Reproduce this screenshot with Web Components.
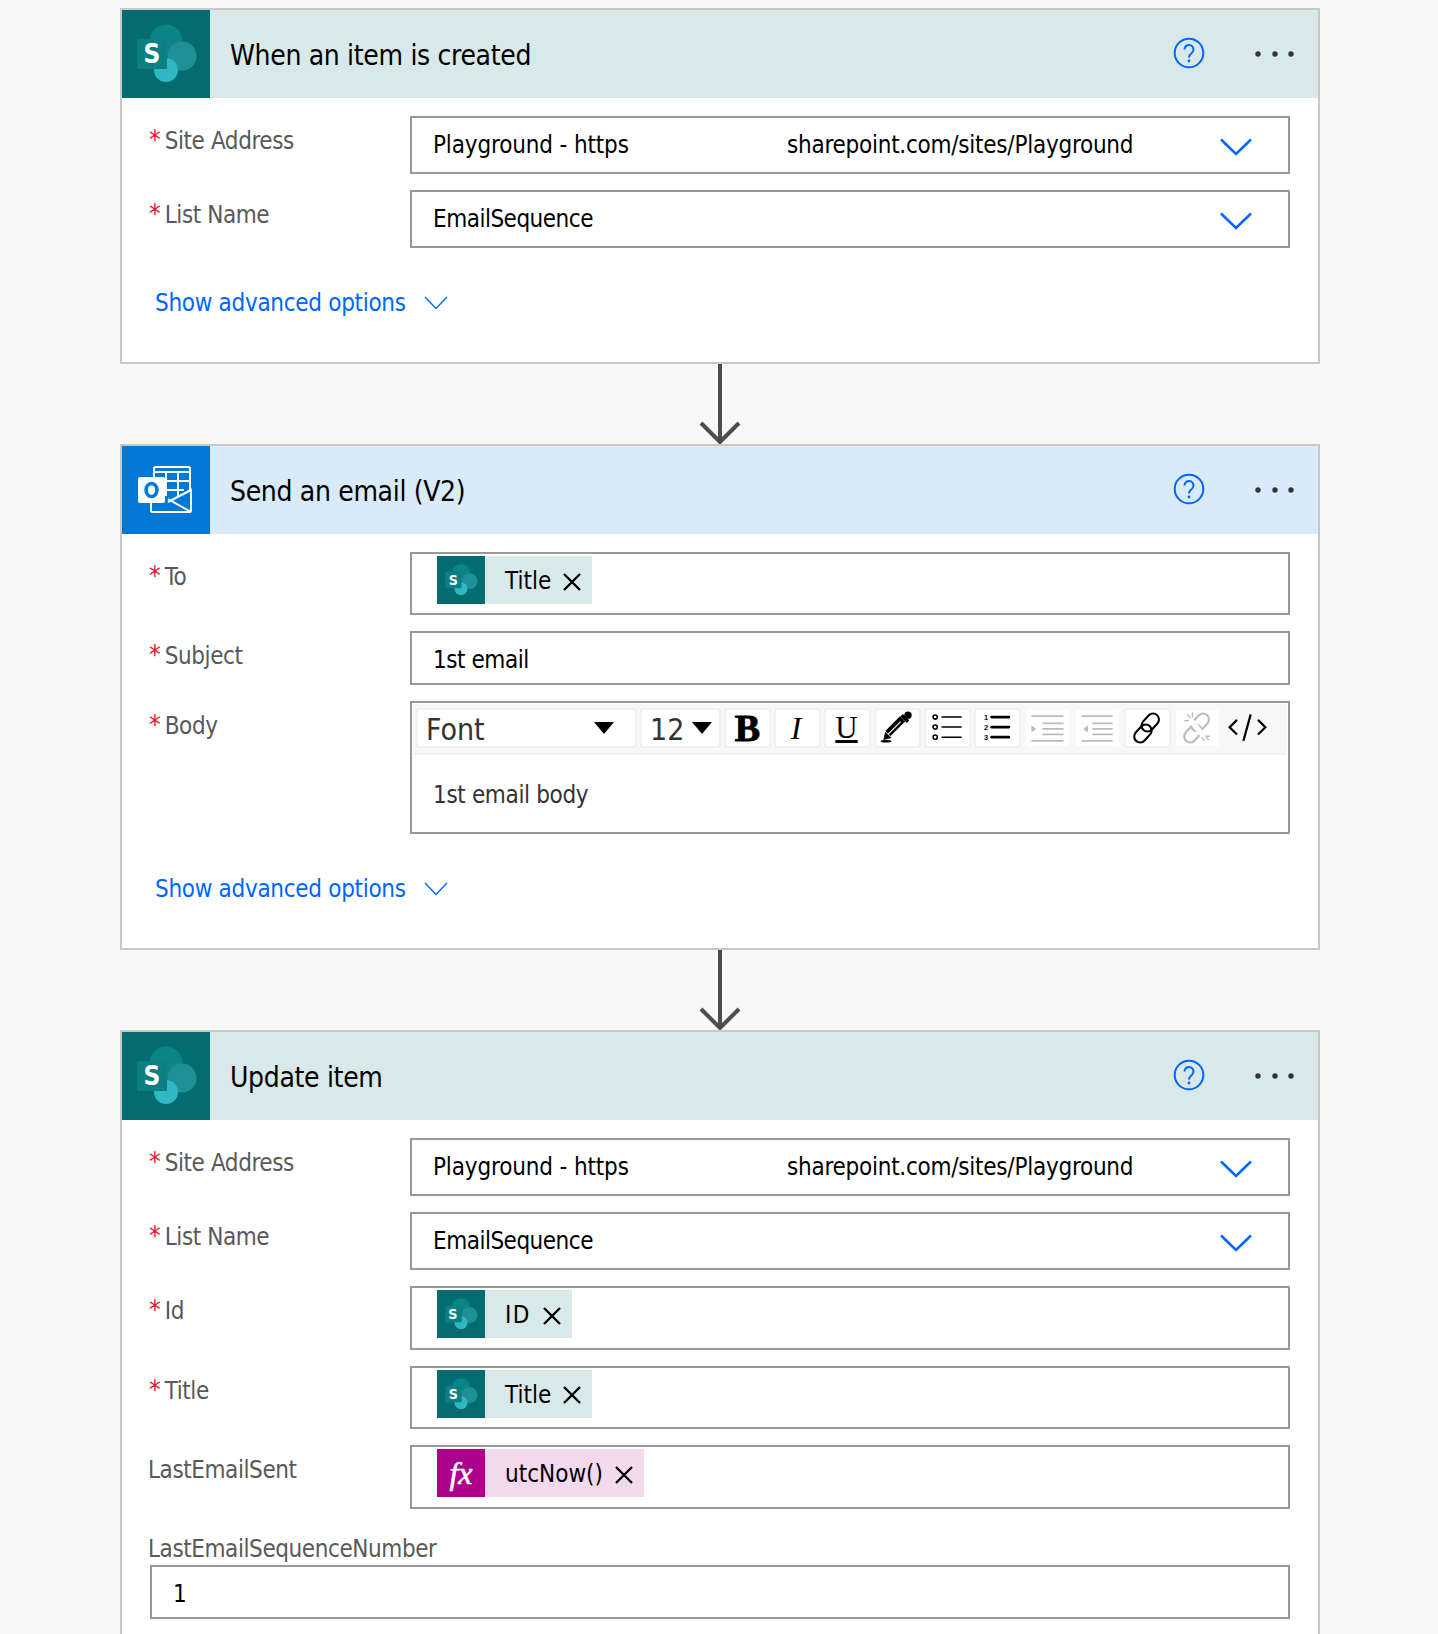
<!DOCTYPE html>
<html>
<head>
<meta charset="utf-8">
<title>Flow</title>
<style>
    html { height: 1634px; overflow: hidden; }
    body {
        margin: 0;
        background: #f8f8f8;
        font-family: "DejaVu Sans", "Noto Sans", sans-serif;
        font-stretch: condensed;
        font-size: 24px;
        color: #000;
    }
    main { display: block; width: 1200px; padding: 8px 0 0 120px; }
    .site { display: inline-block; width: 354px; letter-spacing: -0.15px; }
    .list { letter-spacing: -0.5px; }
</style>
</head>
<body>
<main>
    <fl-card heading="When an item is created" kind="sharepoint">
        <fl-field label="Site Address" required>
            <fl-select><span class="site">Playground - https</span>sharepoint.com/sites/Playground</fl-select>
        </fl-field>
        <fl-field label="List Name" required><fl-select><span class="list">EmailSequence</span></fl-select></fl-field>
        <fl-advanced slot="footer"></fl-advanced>
    </fl-card>
    <fl-arrow></fl-arrow>
    <fl-card heading="Send an email (V2)" kind="outlook">
        <fl-field label="To" required><fl-tokens style="height:63px"><fl-token kind="sharepoint">Title</fl-token></fl-tokens></fl-field>
        <fl-field label="Subject" required><fl-input>1st email</fl-input></fl-field>
        <fl-field label="Body" required><fl-editor>1st email body</fl-editor></fl-field>
        <fl-advanced slot="footer"></fl-advanced>
    </fl-card>
    <fl-arrow></fl-arrow>
    <fl-card heading="Update item" kind="sharepoint">
        <fl-field label="Site Address" required>
            <fl-select><span class="site">Playground - https</span>sharepoint.com/sites/Playground</fl-select>
        </fl-field>
        <fl-field label="List Name" required><fl-select><span class="list">EmailSequence</span></fl-select></fl-field>
        <fl-field label="Id" required><fl-tokens><fl-token kind="sharepoint" style="letter-spacing:1.5px">ID</fl-token></fl-tokens></fl-field>
        <fl-field label="Title" required><fl-tokens><fl-token kind="sharepoint">Title</fl-token></fl-tokens></fl-field>
        <fl-field label="LastEmailSent"><fl-tokens><fl-token kind="fx">utcNow()</fl-token></fl-tokens></fl-field>
        <fl-field label="LastEmailSequenceNumber" stacked><fl-input>1</fl-input></fl-field>
    </fl-card>
</main>
<script>
const sharepointSvg = `
    <svg viewBox="0 0 88 88" width="100%" height="100%" style="display:block">
        <rect width="88" height="88" fill="#036c70"/>
        <circle cx="44" cy="31" r="16.5" fill="#0a8487"/>
        <circle cx="60" cy="46" r="14.5" fill="#1f9095"/>
        <circle cx="44" cy="60" r="12" fill="#2fb8c3"/>
        <rect x="15" y="29" width="30" height="30" rx="1.5" fill="#0b7f82"/>
        <text x="30" y="53" text-anchor="middle" fill="#fff" font-family="'DejaVu Sans',sans-serif" font-weight="700" font-size="26">S</text>
    </svg>`

const outlookSvg = `
    <svg viewBox="0 0 88 88" width="100%" height="100%" style="display:block">
        <rect width="88" height="88" fill="#0078d4"/>
        <g fill="none" stroke="#fff" stroke-width="2">
            <path d="M32 36V22.5a1.5 1.5 0 0 1 1.5-1.5h33a1.5 1.5 0 0 1 1.500 1.500V44"/>
            <path d="M32 26h36M44 26v24M56 26v24M44 35h24M44 44h18"/>
            <path d="M29 56v8.5a1.500 1.500 0 0 0 1.500 1.500h37a1.500 1.500 0 0 0 1.500-1.500V44L46 56M46 53l23 13"/>
        </g>
        <rect x="16" y="31" width="27" height="26" rx="2" fill="#fff"/>
        <ellipse cx="29.500" cy="44" rx="5.500" ry="6.500" fill="none" stroke="#0078d4" stroke-width="3.500"/>
    </svg>`

class FlCard extends HTMLElement {
    constructor() {
        super()
        this.root = this.attachShadow({ mode: "open" })
        const isOutlook = this.getAttribute("kind") === "outlook"
        this.root.innerHTML = `
            <style>
            :host {
                display: block;
                background: #fff;
                border: 2px solid #c8c8c8;
            }
            header {
                display: flex;
                align-items: center;
                height: 88px;
                background: ${isOutlook ? "#d9eaf8" : "#d9e8e8"};
            }
            .icon { width: 88px; height: 88px; flex: none; }
            h2 {
                flex: 1;
                margin: 2px 0 0 20px;
                font-size: 28px;
                font-weight: 400;
                letter-spacing: -0.33px;
                color: #000;
            }
            .help { width: 32px; height: 32px; margin: -2px 48px 0 0; }
            .more { width: 44px; height: 10px; margin-right: 21px; }
            .fields {
                display: flex;
                flex-direction: column;
                gap: 16px;
                padding: 18px 28px 0 26px;
            }
            .footer { padding: 38px 0 42px 33px; }
            </style>
            <header>
                <div class="icon">${isOutlook ? outlookSvg : sharepointSvg}</div>
                <h2></h2>
                <svg class="help" viewBox="0 0 32 32">
                    <circle cx="16" cy="16" r="14.300" fill="none" stroke="#0066ff" stroke-width="2"/>
                    <path d="M11.500 12.500a4.500 4.500 0 1 1 7.300 3.500c-1.800 1.400-2.800 2.300-2.800 4.500" fill="none" stroke="#0066ff" stroke-width="2"/>
                    <circle cx="16" cy="24" r="1.400" fill="#0066ff"/>
                </svg>
                <svg class="more" viewBox="0 0 44 10">
                    <circle cx="5" cy="5" r="2.700" fill="#333"/>
                    <circle cx="22" cy="5" r="2.700" fill="#333"/>
                    <circle cx="38" cy="5" r="2.700" fill="#333"/>
                </svg>
            </header>
            <div class="fields"><slot></slot></div>
            <div class="footer"><slot name="footer"></slot></div>
        `
        this.root.querySelector("h2").textContent = this.getAttribute("heading")
    }
}

class FlArrow extends HTMLElement {
    constructor() {
        super()
        this.root = this.attachShadow({ mode: "open" })
        this.root.innerHTML = `
            <style>
            :host { display: flex; justify-content: center; height: 80px; }
            svg { display: block; }
            </style>
            <svg width="48" height="80" viewBox="0 0 48 80">
                <path d="M24 0V78" stroke="#4d4d4d" stroke-width="4" fill="none"/>
                <path d="M5 59L24 78L43 59" stroke="#4d4d4d" stroke-width="4" fill="none"/>
            </svg>
        `
    }
}

class FlField extends HTMLElement {
    constructor() {
        super()
        this.root = this.attachShadow({ mode: "open" })
        const stacked = this.hasAttribute("stacked")
        this.root.innerHTML = `
            <style>
            :host {
                display: grid;
                grid-template-columns: ${stacked ? "1fr" : "262px 1fr"};
            }
            label {
                display: block;
                height: ${stacked ? "40.500px" : "auto"};
                padding-top: ${stacked ? "8px" : "9px"};
                box-sizing: border-box;
                line-height: 33px;
                font-size: 24px;
                letter-spacing: -0.42px;
                color: #595959;
                white-space: nowrap;
            }
            b { font-weight: 400; font-size: 26px; line-height: 0; color: #e8112d; margin: 0 4px 0 1px; letter-spacing: 0; }
            .value { min-width: 0; ${stacked ? "margin-left: 2px;" : ""} }
            </style>
            <label>${this.hasAttribute("required") ? "<b>*</b>" : ""}<span></span></label>
            <div class="value"><slot></slot></div>
        `
        this.root.querySelector("span").textContent = this.getAttribute("label")
    }
}

class FlSelect extends HTMLElement {
    constructor() {
        super()
        this.root = this.attachShadow({ mode: "open" })
        this.root.innerHTML = `
            <style>
            :host {
                display: flex;
                align-items: center;
                height: 58px;
                box-sizing: border-box;
                padding: 0 36px 0 21px;
                border: 2px solid #999;
                font-size: 24px;
                letter-spacing: -0.25px;
                white-space: nowrap;
            }
            div { flex: 1; }
            svg { display: block; width: 32px; height: 18px; margin-top: 3px; }
            </style>
            <div><slot></slot></div>
            <svg viewBox="0 0 32 18"><path d="M1 1.500L16 16L31 1.500" fill="none" stroke="#0066ff" stroke-width="2.500"/></svg>
        `
    }
}

class FlInput extends HTMLElement {
    constructor() {
        super()
        this.root = this.attachShadow({ mode: "open" })
        this.root.innerHTML = `
            <style>
            :host {
                display: flex;
                align-items: center;
                height: 54px;
                box-sizing: border-box;
                padding: 4px 21px 0;
                border: 2px solid #999;
                font-size: 24px;
                letter-spacing: -0.45px;
            }
            </style>
            <slot></slot>
        `
    }
}

class FlTokens extends HTMLElement {
    constructor() {
        super()
        this.root = this.attachShadow({ mode: "open" })
        this.root.innerHTML = `
            <style>
            :host {
                display: flex;
                height: 63.500px;
                box-sizing: border-box;
                padding: 2px 0 0 25px;
                border: 2px solid #999;
            }
            </style>
            <slot></slot>
        `
    }
}

class FlToken extends HTMLElement {
    constructor() {
        super()
        this.root = this.attachShadow({ mode: "open" })
        const isFx = this.getAttribute("kind") === "fx"
        this.root.innerHTML = `
            <style>
            :host {
                display: flex;
                align-items: center;
                height: 48px;
                padding-right: 10px;
                background: ${isFx ? "#f2d9ee" : "#d9e8e8"};
                font-size: 24px;
                white-space: nowrap;
            }
            .icon { width: 48px; height: 48px; flex: none; margin-right: 20px; }
            .fx {
                display: flex;
                align-items: center;
                justify-content: center;
                background: #ad008c;
                color: #fff;
                font: italic 400 32px "Liberation Serif", serif;
                letter-spacing: 0;
                -webkit-text-stroke: 0.6px #fff;
            }
            .label { padding-top: 2px; }
            svg.x { width: 20px; height: 20px; margin: 3px 0 0 11px; }
            </style>
            <div class="icon ${isFx ? "fx" : ""}">${isFx ? "fx" : sharepointSvg}</div>
            <span class="label"><slot></slot></span>
            <svg class="x" viewBox="0 0 20 20"><path d="M2 2L18 18M18 2L2 18" stroke="#000" stroke-width="2.300"/></svg>
        `
    }
}

class FlAdvanced extends HTMLElement {
    constructor() {
        super()
        this.root = this.attachShadow({ mode: "open" })
        this.root.innerHTML = `
            <style>
            :host {
                display: flex;
                align-items: center;
                height: 34px;
                font-size: 24px;
                letter-spacing: -0.3px;
                color: #0066ff;
            }
            svg { width: 24px; height: 14px; margin-left: 18px; }
            </style>
            <span>Show advanced options</span>
            <svg viewBox="0 0 24 14"><path d="M1 1L12 12.500L23 1" fill="none" stroke="#0066ff" stroke-width="1.400"/></svg>
        `
    }
}

class FlToolButton extends HTMLElement {
    constructor() {
        super()
        this.root = this.attachShadow({ mode: "open" })
        this.root.innerHTML = `
            <style>
            :host {
                display: flex;
                align-items: center;
                justify-content: center;
                box-sizing: border-box;
                width: 47px;
                height: 40px;
                background: #fff;
                border: 2px solid #f1f1f1;
                border-radius: 3px;
                flex: none;
            }
            :host([plain]) { border-color: transparent; background: transparent; }
            :host([faint]) { border-color: #f8f8f8; }
            </style>
            <slot></slot>
        `
    }
}

const toolIcons = {
    color: `<svg width="47" height="40" viewBox="0 0 47 40">
        <path d="M13 26L29 10" stroke="#000" stroke-width="8"/>
        <path d="M13 27L27 13" stroke="#fff" stroke-width="1.200"/>
        <path d="M8 33L10 24L17 31Z" fill="#000"/>
        <path d="M28 6L35 13" stroke="#000" stroke-width="4"/>
        <circle cx="35" cy="6" r="4" fill="#000"/>
        <ellipse cx="11" cy="34.500" rx="6" ry="1.400" fill="#000"/>
    </svg>`,
    bullets: `<svg width="47" height="40" viewBox="0 0 47 40" fill="none" stroke="#000">
        <circle cx="10" cy="8" r="2.300" stroke-width="1.700"/>
        <circle cx="10" cy="19" r="2.300" stroke-width="1.700"/>
        <circle cx="10" cy="30" r="2.300" stroke-width="1.700"/>
        <path d="M17 8H39M17 19H39M17 30H39" stroke-width="1.600"/>
    </svg>`,
    numbers: `<svg width="47" height="40" viewBox="0 0 47 40">
        <g font-family="'Liberation Sans',sans-serif" font-weight="700" font-size="8" text-anchor="middle" fill="#000">
            <text x="11" y="11">1</text><text x="11" y="22">2</text><text x="11" y="33">3</text>
        </g>
        <path d="M17 8H36M17 19H36M17 30H36" stroke="#000" stroke-width="3" stroke-linecap="round"/>
    </svg>`,
    indent: `<svg width="47" height="40" viewBox="0 0 47 40">
        <path d="M6 7H41M18 15H41M18 21H41M18 27H41M6 34H41" stroke="#bbb" stroke-width="2"/>
        <path d="M6 17L11 21L6 25Z" fill="#bbb"/>
    </svg>`,
    outdent: `<svg width="47" height="40" viewBox="0 0 47 40">
        <path d="M6 7H40M18 15H40M18 21H40M18 27H40M6 34H40" stroke="#bbb" stroke-width="2"/>
        <path d="M13 17L8 21L13 25Z" fill="#bbb"/>
    </svg>`,
    link: `<svg width="47" height="40" viewBox="0 0 47 40" fill="none" stroke="#000" stroke-width="2.300">
        <rect x="20" y="3" width="13" height="22" rx="6.500" transform="rotate(42 26.500 14)"/>
        <rect x="12" y="15" width="13" height="22" rx="6.500" transform="rotate(42 18.500 26)"/>
    </svg>`,
    unlink: `<svg width="47" height="40" viewBox="0 0 47 40" fill="none" stroke="#bbb" stroke-width="2.300">
        <rect x="20" y="3" width="13" height="22" rx="6.500" transform="rotate(42 26.500 14)"/>
        <rect x="12" y="15" width="13" height="22" rx="6.500" transform="rotate(42 18.500 26)"/>
        <path d="M14 9L32 31" stroke="#fff" stroke-width="6"/>
        <path d="M12 5l4 4M9 12h5M18 3v5M31 34l-3-4M37 29h-5M36 33l-3-3" stroke-width="1.500"/>
    </svg>`,
    code: `<svg width="47" height="40" viewBox="0 0 47 40" fill="none" stroke="#000" stroke-width="2.400" style="margin-top:2px">
        <path d="M12 10L4 18L12 26M35 10L43 18L35 26M27 4L19 33"/>
    </svg>`
}

class FlEditor extends HTMLElement {
    constructor() {
        super()
        this.root = this.attachShadow({ mode: "open" })
        this.root.innerHTML = `
            <style>
            :host {
                display: block;
                height: 133px;
                box-sizing: border-box;
                border: 2px solid #999;
            }
            .bar {
                display: flex;
                gap: 3px;
                box-sizing: border-box;
                height: 51px;
                margin: 1px 1px 0;
                padding: 4px 3px 0;
                background: #f8f8f8;
                border-bottom: 2px solid #f1f1f1;
            }
            .drop {
                display: flex;
                align-items: center;
                box-sizing: border-box;
                height: 40px;
                padding: 2px 21px 0 8px;
                background: #fff;
                border: 2px solid #f1f1f1;
                border-radius: 3px;
                color: #333;
                font-size: 30px;
            }
            .drop span { flex: 1; }
            .font { width: 221px; }
            .size { width: 81px; padding-right: 7px; }
            .arrow {
                width: 0;
                height: 0;
                margin-top: -2px;
                border-left: 10px solid transparent;
                border-right: 10px solid transparent;
                border-top: 12px solid #000;
            }
            .serif { font-family: "Liberation Serif", serif; color: #000; }
            .b { font-size: 38px; font-weight: 700; -webkit-text-stroke: 1px #000; }
            .i { font-size: 32px; font-style: italic; margin-right: 3px; }
            .u { font-size: 31px; text-decoration: underline; margin-right: 2px; }
            .body {
                padding: 26px 20px 0 21px;
                color: #333;
                font-size: 24px;
                letter-spacing: -0.35px;
            }
            </style>
            <div class="bar">
                <div class="drop font"><span>Font</span><i class="arrow"></i></div>
                <div class="drop size"><span>12</span><i class="arrow"></i></div>
                <fl-tool-button><span class="serif b">B</span></fl-tool-button>
                <fl-tool-button><span class="serif i">I</span></fl-tool-button>
                <fl-tool-button><span class="serif u">U</span></fl-tool-button>
                <fl-tool-button>${toolIcons.color}</fl-tool-button>
                <fl-tool-button>${toolIcons.bullets}</fl-tool-button>
                <fl-tool-button>${toolIcons.numbers}</fl-tool-button>
                <fl-tool-button faint>${toolIcons.indent}</fl-tool-button>
                <fl-tool-button faint>${toolIcons.outdent}</fl-tool-button>
                <fl-tool-button>${toolIcons.link}</fl-tool-button>
                <fl-tool-button faint>${toolIcons.unlink}</fl-tool-button>
                <fl-tool-button plain>${toolIcons.code}</fl-tool-button>
            </div>
            <div class="body"><slot></slot></div>
        `
    }
}

window.customElements.define("fl-card", FlCard)
window.customElements.define("fl-arrow", FlArrow)
window.customElements.define("fl-field", FlField)
window.customElements.define("fl-select", FlSelect)
window.customElements.define("fl-input", FlInput)
window.customElements.define("fl-tokens", FlTokens)
window.customElements.define("fl-token", FlToken)
window.customElements.define("fl-advanced", FlAdvanced)
window.customElements.define("fl-tool-button", FlToolButton)
window.customElements.define("fl-editor", FlEditor)
</script>
</body>
</html>
